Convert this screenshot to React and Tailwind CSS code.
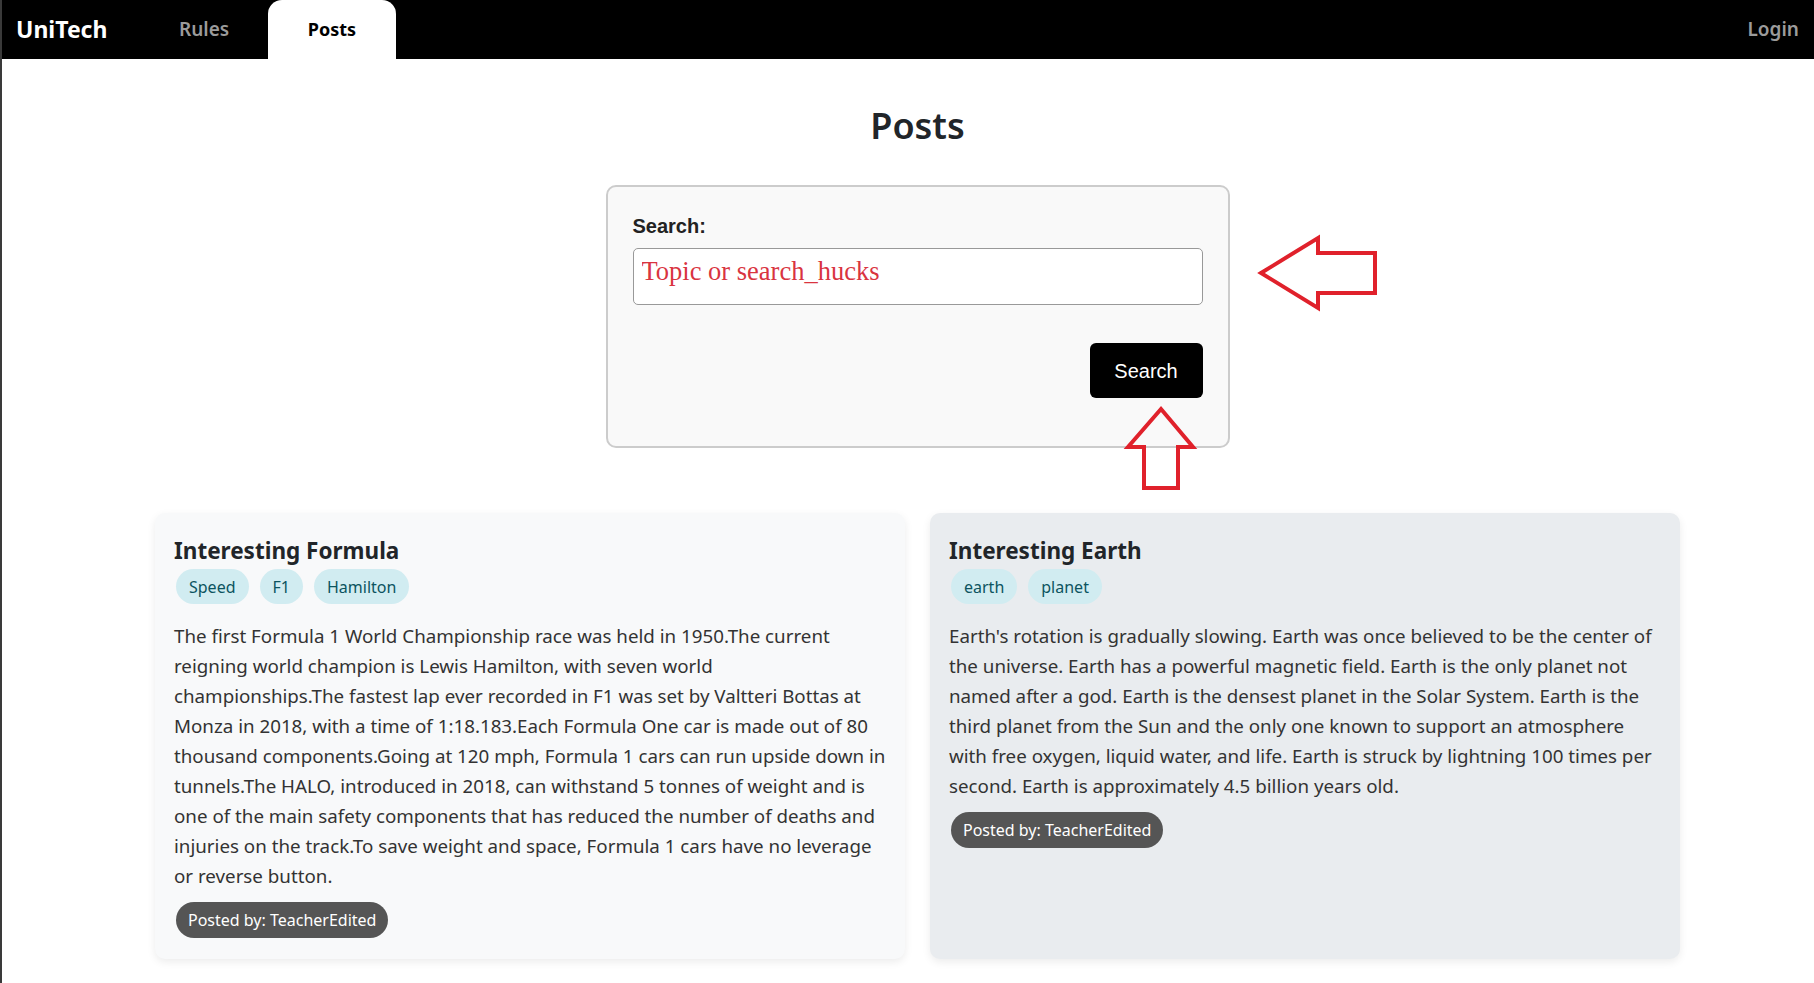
import React from 'react';

const posts = [
  {
    title: 'Interesting Formula',
    tags: ['Speed', 'F1', 'Hamilton'],
    body:
      'The first Formula 1 World Championship race was held in 1950.The current reigning world champion is Lewis Hamilton, with seven world championships.The fastest lap ever recorded in F1 was set by Valtteri Bottas at Monza in 2018, with a time of 1:18.183.Each Formula One car is made out of 80 thousand components.Going at 120 mph, Formula 1 cars can run upside down in tunnels.The HALO, introduced in 2018, can withstand 5 tonnes of weight and is one of the main safety components that has reduced the number of deaths and injuries on the track.To save weight and space, Formula 1 cars have no leverage or reverse button.',
    author: 'TeacherEdited',
    bg: 'bg-[#f8f9fa]',
  },
  {
    title: 'Interesting Earth',
    tags: ['earth', 'planet'],
    body:
      "Earth's rotation is gradually slowing. Earth was once believed to be the center of the universe. Earth has a powerful magnetic field. Earth is the only planet not named after a god. Earth is the densest planet in the Solar System. Earth is the third planet from the Sun and the only one known to support an atmosphere with free oxygen, liquid water, and life. Earth is struck by lightning 100 times per second. Earth is approximately 4.5 billion years old.",
    author: 'TeacherEdited',
    bg: 'bg-[#e9ecef]',
  },
];

function PostCard({ post }) {
  return (
    <div className={`${post.bg} rounded-[10px] shadow-[0_3px_8px_rgba(0,0,0,0.08)] pt-[22px] px-[19px] pb-[21px]`}>
      <h3 className="text-[22.5px] font-bold leading-[32px] text-[#212529]">{post.title}</h3>
      <div className="mt-[2px] ml-[2px] flex gap-[11px]">
        {post.tags.map((t) => (
          <span
            key={t}
            className="h-[35px] px-[13px] inline-flex items-center rounded-full bg-[#d1ecf1] text-[#0c5460] text-[16px]"
          >
            {t}
          </span>
        ))}
      </div>
      <p className="mt-[17px] text-[18.75px] leading-[30px] text-[#333]">{post.body}</p>
      <span className="mt-[11px] ml-[2px] h-[36px] px-[12px] inline-flex items-center rounded-full bg-[#555] text-white text-[16px]">
        Posted by: {post.author}
      </span>
    </div>
  );
}

export default function App() {
  return (
    <div
      className="relative min-h-screen bg-white border-l-2 border-[#3a3a3a]"
      style={{ fontFamily: '"Noto Sans", "Open Sans", sans-serif' }}
    >
      <nav className="h-[59px] bg-black flex items-center">
        <div className="w-[177px] pl-[14px] text-[23px] font-bold text-white">UniTech</div>
        <a className="w-[89px] text-[19px] font-semibold text-[#9b9b9b]">Rules</a>
        <a className="w-[128px] h-full flex items-center justify-center bg-white rounded-t-[14px] text-[18px] font-bold text-black">
          Posts
        </a>
        <a className="ml-auto mr-[15px] text-[19px] font-semibold text-[#9b9b9b]">Login</a>
      </nav>

      <main className="pl-[19px] flex flex-col items-center">
        <h1 className="mt-[45px] text-[36px] leading-[43px] font-semibold text-[#212529]">Posts</h1>

        <div
          className="mt-[38px] w-[624px] h-[263px] border-2 border-[#cccccc] rounded-[10px] bg-[#f9f9f9] px-[25px] pt-[28px] flex flex-col"
          style={{ fontFamily: '"Liberation Sans", Arial, sans-serif' }}
        >
          <label className="text-[20px] leading-[23px] font-bold text-[#222]">Search:</label>
          <input
            className="mt-[10px] h-[57px] w-full bg-white border border-[#999] rounded-[5px] px-[8px] pb-[11px] text-[26.5px] outline-none placeholder:text-[#d9343f]"
            style={{ fontFamily: '"Liberation Serif", "Times New Roman", serif' }}
            placeholder="Topic or search_hucks"
          />
          <button className="mt-[38px] self-end h-[55px] w-[113px] bg-black text-white text-[20px] rounded-[6px]">
            Search
          </button>
        </div>

        <div className="mt-[65px] w-[1525px] grid grid-cols-2 gap-[25px]">
          {posts.map((p) => (
            <PostCard key={p.title} post={p} />
          ))}
        </div>
        <div className="h-[30px]" />
      </main>

      {/* red annotation arrows */}
      <svg className="absolute left-[1253px] top-[232px]" width="126" height="82" viewBox="0 0 126 82">
        <polygon
          points="6,41 63,6 63,21 120,21 120,61 63,61 63,76"
          fill="none"
          stroke="#e0212b"
          strokeWidth="4"
          strokeLinejoin="miter"
        />
      </svg>
      <svg className="absolute left-[1120px] top-[403px]" width="78" height="92" viewBox="0 0 78 92">
        <polygon
          points="39,6 71,44 56,44 56,85 22,85 22,44 6,44"
          fill="none"
          stroke="#e0212b"
          strokeWidth="4"
          strokeLinejoin="miter"
        />
      </svg>
    </div>
  );
}
